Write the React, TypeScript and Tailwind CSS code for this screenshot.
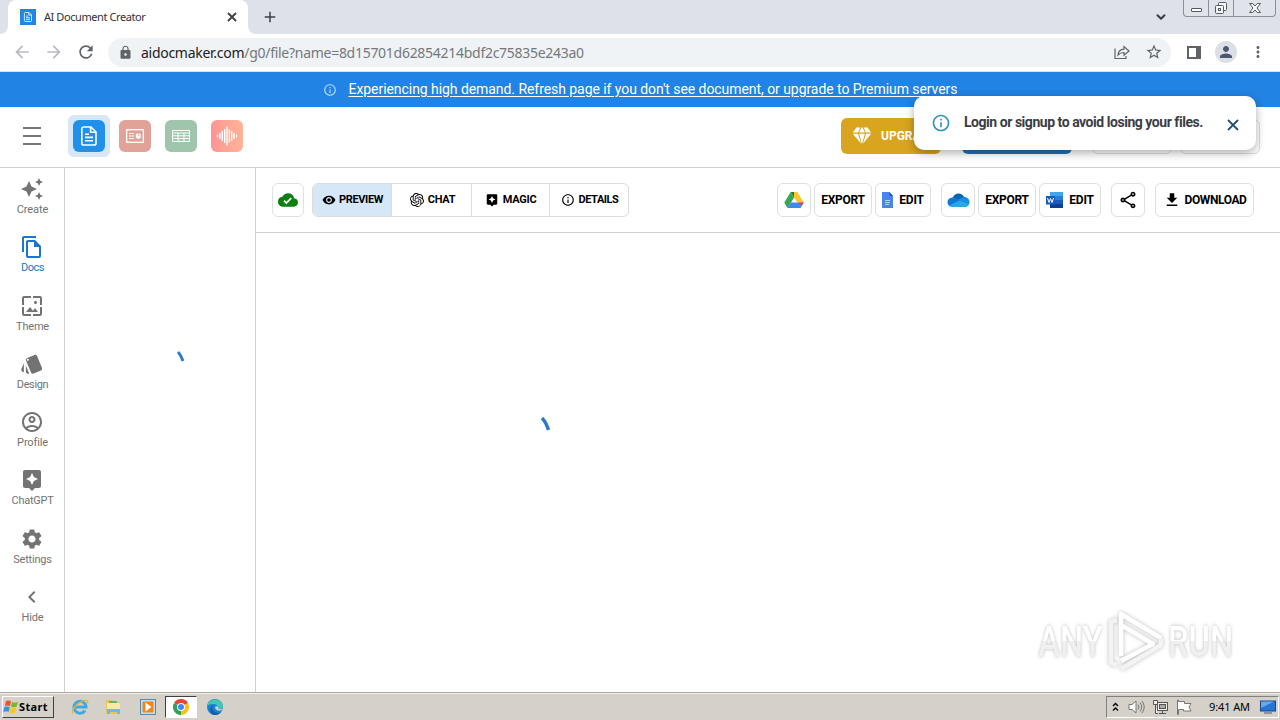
import type { ReactNode } from "react";
import {
  MdArrowBack, MdArrowForward, MdRefresh, MdLock, MdStarBorder, MdPerson, MdMoreVert, MdAdd,
  MdInfoOutline, MdAutoAwesome, MdOutlineFileCopy, MdWallpaper, MdStyle, MdOutlineAccountCircle,
  MdAssistant, MdSettings, MdChevronLeft, MdCloudDone, MdVisibility, MdOutlineShare, MdDownload,
} from "react-icons/md";
import { SiOpenai } from "react-icons/si";
import { ChevronDown } from "lucide-react";

const sidebarItems = [
  { label: "Create", icon: MdAutoAwesome, tracking: "tracking-[-0.1px]" },
  { label: "Docs", icon: MdOutlineFileCopy, tracking: "tracking-[-0.5px]", active: true },
  { label: "Theme", icon: MdWallpaper, tracking: "tracking-[-0.2px]" },
  { label: "Design", icon: MdStyle, tracking: "tracking-[-0.4px]" },
  { label: "Profile", icon: MdOutlineAccountCircle, tracking: "tracking-[-0.15px]" },
  { label: "ChatGPT", icon: MdAssistant, tracking: "tracking-[-0.25px]" },
  { label: "Settings", icon: MdSettings, tracking: "tracking-[-0.2px]" },
  { label: "Hide", icon: MdChevronLeft, tracking: "tracking-[-0.1px]" },
];

function DocGlyph({ className }: { className?: string }) {
  return (
    <svg viewBox="0 0 20 20" className={className} fill="none" stroke="white" strokeWidth="1.6">
      <path d="M4.5 1H12l5 5v11.2a1.8 1.8 0 0 1-1.8 1.8H4.6a1.8 1.8 0 0 1-1.8-1.8V2.8A1.8 1.8 0 0 1 4.5 1Z" />
      <path d="M11.6 1v5.2H17" />
      <path d="M6 8.2h4M6 11.4h8M6 14.8h8" />
    </svg>
  );
}

function TabStrip() {
  return (
    <div className="flex h-[34px] bg-[#dee1e9]">
      <div className="w-2 bg-white">
        <div className="h-full rounded-br-lg bg-[#dee1e9]" />
      </div>
      <div className="flex w-60 items-center rounded-t-lg bg-white pl-3 pr-[9px]">
        <div className="flex h-4 w-4 items-center justify-center bg-[#2187e3]">
          <DocGlyph className="h-2.5 w-2.5" />
        </div>
        <span className="ml-2 flex-1 whitespace-nowrap font-['Noto_Sans',sans-serif] text-[11px] tracking-[-0.42px] text-[#303236]">
          AI Document Creator
        </span>
        <svg className="h-3.5 w-3.5" viewBox="0 0 14 14" stroke="#3c4043" strokeWidth="1.800">
          <path d="m3 3 8 8M11 3l-8 8" />
        </svg>
      </div>
      <div className="w-2 bg-white">
        <div className="h-full rounded-bl-lg bg-[#dee1e9]" />
      </div>
      <MdAdd className="ml-[5px] mt-2 h-[18px] w-[18px] text-[#3c4043]" />
      <div className="flex-1" />
      <ChevronDown className="mr-[15px] mt-2.5 h-3.5 w-3.5 text-[#3c4043]" strokeWidth={3.5} />
      {/* Window controls */}
      <div className="mr-1 flex h-[17px] w-[93px] rounded-b border border-t-0 border-[#8b8f98] bg-[#e0e3e9]">
        <div className="flex w-[25px] items-center justify-center border-r border-[#8b8f98]">
          <div className="mt-1 h-1 w-[11px] rounded-[1px] border border-[#555a62] bg-white" />
        </div>
        <div className="flex w-[25px] items-center justify-center border-r border-[#8b8f98]">
          <svg className="h-3.5 w-3.5" viewBox="0 0 14 14" fill="#f4f5f7" stroke="#555a62">
            <rect x="4.5" y="1.5" width="8" height="8" rx="1" />
            <rect x="1.5" y="4.5" width="8" height="8" rx="1" />
            <rect x="4.5" y="7.5" width="2" height="2" />
          </svg>
        </div>
        <div className="flex flex-1 items-center justify-center">
          <svg className="h-3 w-3.5" viewBox="0 0 14 12" fill="#f7f8fa" stroke="#555a62">
            <path d="M1.5 1.5h3.2L7 4l2.3-2.5h3.2L9 6l3.5 4.5H9.3L7 8l-2.3 2.5H1.5L5 6Z" />
          </svg>
        </div>
      </div>
    </div>
  );
}

function AddressBar() {
  return (
    <div className="flex h-[38px] items-center border-b border-[#dcdfe3] bg-white pb-px text-[#5f6368]">
      <MdArrowBack className="ml-3 h-5 w-5 text-[#b9bbbe]" />
      <MdArrowForward className="ml-3 h-5 w-5 text-[#b9bbbe]" />
      <MdRefresh className="ml-3 h-5 w-5" />
      <div className="ml-3 flex h-[29px] w-[1063px] items-center rounded-full bg-[#f0f3f5] pl-2.5 pr-2">
        <MdLock className="h-[15px] w-[15px]" />
        <span className="ml-2 mt-0.5 flex-1 whitespace-nowrap font-['Noto_Sans',sans-serif] text-sm tracking-[-0.28px] text-[#74787d]">
          <span className="text-[#202124]">aidocmaker.com</span>/g0/file?name=8d15701d62854214bdf2c75835e243a0
        </span>
        <svg className="mr-[15px] h-4 w-4" viewBox="0 0 16 16" fill="none" stroke="#5f6368" strokeWidth="1.2">
          <path d="M1 4.5V14.5h11V12" />
          <path d="M4 11c.3-4 2.7-5.7 6-5.8V2.5L15 7l-5 4.200V8.500C7.200 8.500 5.500 9.200 4 11Z" />
        </svg>
        <MdStarBorder className="h-[18px] w-[18px]" />
      </div>
      <div className="ml-4 h-[13px] w-3.5 border-2 border-r-[5px] border-[#5f6368]" />
      <div className="ml-3.5 flex h-[22px] w-[22px] items-center justify-center rounded-full bg-[#dcdfe5]">
        <MdPerson className="h-[18px] w-[18px] text-[#4b5670]" />
      </div>
      <MdMoreVert className="ml-3 h-[18px] w-[18px]" />
    </div>
  );
}

function Banner() {
  return (
    <div className="flex h-[35px] items-center justify-center bg-[#2183e3] text-white">
      <MdInfoOutline className="mr-3 h-[14px] w-[14px] text-[#b9dcfa]" />
      <span className="mb-0.5 whitespace-nowrap text-sm tracking-[-0.06px] underline underline-offset-2">
        Experiencing high demand. Refresh page if you don't see document, or upgrade to Premium servers
      </span>
    </div>
  );
}

function AppHeader() {
  return (
    <div className="relative flex h-[61px] items-center border-b border-[#cfcfcf] bg-white pb-0.5">
      <div className="ml-[23px] flex w-[18px] flex-col gap-1.5">
        <div className="h-0.5 bg-[#777]" />
        <div className="h-0.5 bg-[#777]" />
        <div className="h-0.5 bg-[#777]" />
      </div>
      <div className="ml-[27px] flex h-[42px] w-[42px] items-center justify-center rounded-md bg-[#d6e7f8]">
        <div className="flex h-8 w-8 items-center justify-center rounded-md bg-[#2090ea]">
          <DocGlyph className="h-5 w-5" />
        </div>
      </div>
      <div className="ml-[9px] flex gap-3.5">
        <div className="flex h-8 w-8 items-center justify-center rounded-md bg-[#e1a297]">
          <svg className="h-[14px] w-[18px]" viewBox="0 0 18 14" fill="none" stroke="white">
            <rect x=".7" y=".7" width="16.600" height="12.600" strokeWidth="1.300" />
            <path d="M3 4.500h5M3 7h5M3 9.500h5" strokeWidth="1.200" />
            <circle cx="12.300" cy="7" r="2.700" fill="white" stroke="none" />
            <path d="M12.500 6.800V3.800M12.500 6.800h3" stroke="#e1a297" strokeWidth=".6" />
          </svg>
        </div>
        <div className="flex h-8 w-8 items-center justify-center rounded-md bg-[#9fc5ad]">
          <svg className="h-3 w-[18px]" viewBox="0 0 18 12" fill="none" stroke="white">
            <path d="M.5.5h17v11H.5ZM.5 3h17M.5 5.800h17M.5 8.600h17M6 3v8.500M12 3v8.500" />
          </svg>
        </div>
        <div className="flex h-8 w-8 items-center justify-center rounded-md bg-gradient-to-r from-[#ff9494] to-[#ffb497]">
          <svg className="h-5 w-[22px]" viewBox="0 0 22 20" stroke="white" strokeWidth="1.400" strokeLinecap="round">
            <path d="M1.500 9.500v1M4 7.500v5M6.300 5.500v9M8.700 3.500v13M11 1v18M13.400 4v12M15.700 5.500v9M18 7.500v5M20.500 9.500v1" />
          </svg>
        </div>
      </div>
      <div className="flex-1" />
      <div className="flex h-9 w-[100px] items-center rounded-md bg-[#d9a51e] pl-[11px] text-white">
        <svg className="h-[18px] w-5" viewBox="0 0 20 18" fill="white">
          <path d="M4.500.5h3.800L6 5.500H.8ZM9.500.5h1L13 5.500H7ZM11.700.5h3.800l3.700 5H14ZM.8 6.800H6L9 16.500ZM7.200 6.800h5.600L10 17.200ZM14 6.800h5.200L11 16.500Z" />
        </svg>
        <span className="ml-[9px] text-xs font-bold">UPGRADE</span>
      </div>
      <div className="ml-[21px] h-[35px] w-[110px] rounded-md bg-[#1f72ba]" />
      <div className="ml-5 h-[35px] w-20 rounded-md border border-[#ddd]" />
      <div className="ml-2 mr-5 h-[35px] w-20 rounded-md border border-[#ddd]" />
      {/* Login toast */}
      <div className="absolute right-6 top-[-11px] flex h-[54px] w-[342px] items-center rounded-[10px] bg-white pl-[17px] pr-4 shadow-[0_3px_10px_rgba(0,0,0,0.32)]">
        <MdInfoOutline className="h-5 w-5 text-[#3194bf]" />
        <span className="ml-[13px] mb-0.5 flex-1 whitespace-nowrap text-sm font-bold tracking-[-0.46px] text-[#3b3d44]">
          Login or signup to avoid losing your files.
        </span>
        <svg className="mt-1 h-3.5 w-3.5" viewBox="0 0 14 14" stroke="#24506b" strokeWidth="1.800">
          <path d="M2 2l10 10M12 2L2 12" />
        </svg>
      </div>
    </div>
  );
}

function Sidebar() {
  return (
    <div className="flex w-[65px] flex-col border-r border-[#d0d0d0] pt-[9px]">
      {sidebarItems.map(({ label, icon: Icon, tracking, active }) => (
        <div key={label} className={`flex h-[58.3px] flex-col items-center ${active ? "text-[#1b77cc]" : "text-[#737373]"}`}>
          <Icon className="h-6 w-6" />
          <span className={`mt-px whitespace-nowrap pl-px text-[11px] leading-4 ${tracking}`}>{label}</span>
        </div>
      ))}
    </div>
  );
}

function Button({ className, children }: { className: string; children?: ReactNode }) {
  return (
    <div className={`flex h-[34px] items-center justify-center whitespace-nowrap rounded-md border border-[#e0e0e0] bg-white text-xs font-bold text-black ${className}`}>
      {children}
    </div>
  );
}

function DriveLogo() {
  return (
    <svg className="h-[18px] w-5" viewBox="0 0 20 18">
      <path d="M6.700 1 10 6.700 3.500 17 .3 11.500Z" fill="#34a853" />
      <path d="M6.700 1h6.600l6.400 10.500h-6.500Z" fill="#fbc52c" />
      <path d="M6.800 11.500h12.900L16.500 17h-13Z" fill="#4285f4" />
      <path d="M14.800 11.500h4.900L17.800 15Z" fill="#ea4335" />
      <path d="M6.700 1h3.300v5.700Z" fill="#188038" />
    </svg>
  );
}

function OneDriveLogo() {
  return (
    <svg className="h-4 w-[23px]" viewBox="0 0 23 16">
      <path d="M5.500 6C7 1.500 13.500-.8 17 4.800L18 8 6 12Z" fill="#0364b8" />
      <path d="M17 5c3-.3 5.500 2.200 5.500 5s-2 4.500-4.500 4.800L10 8Z" fill="#1490df" />
      <path d="M5.500 5.500c3-.5 5 1.800 8 3.500L3 14.500C-1.200 12 0 5.800 5.500 5.500Z" fill="#0f78d4" />
      <path d="M12.500 8.500 22 12.500c-1 2-2.500 2.500-4 2.500H5c-1.300 0-2.200-.5-3-1.200Z" fill="#28a8ea" />
    </svg>
  );
}

function DocumentToolbar() {
  return (
    <div className="flex h-[65px] items-center border-b border-[#d0d0d0] pl-4 pr-[26px]">
      <Button className="w-8">
        <MdCloudDone className="h-5 w-5 text-[#0b7f10]" />
      </Button>
      <div className="ml-2 flex h-[34px] w-[317px] overflow-hidden rounded-md border border-[#dcdcdc] text-[11px] font-bold text-black">
        <div className="flex flex-1 items-center justify-center gap-[3px] border-r border-[#d4dce4] bg-[#d6e7f7] pl-px">
          <MdVisibility className="h-3.5 w-3.5" />
          <span className="tracking-[-0.35px]">PREVIEW</span>
        </div>
        <div className="flex flex-1 items-center justify-center gap-1 border-r border-[#dcdcdc] pl-0.5">
          <SiOpenai className="h-3.5 w-3.5" />
          <span className="tracking-[-0.3px]">CHAT</span>
        </div>
        <div className="flex flex-1 items-center justify-center gap-1 border-r border-[#dcdcdc]">
          <MdAssistant className="h-3.5 w-3.5" />
          <span className="tracking-[-0.25px]">MAGIC</span>
        </div>
        <div className="flex flex-1 items-center justify-center gap-1 pl-px">
          <MdInfoOutline className="h-3.5 w-3.5" />
          <span className="tracking-[-0.45px]">DETAILS</span>
        </div>
      </div>
      <div className="flex-1" />
      <div className="flex gap-[3px]">
        <Button className="w-[34px]"><DriveLogo /></Button>
        <Button className="w-[58px] tracking-[-0.3px]">EXPORT</Button>
        <Button className="w-14 gap-1.5 tracking-[-0.2px]">
          <svg className="h-4 w-[11px]" viewBox="0 0 11 16">
            <path d="M0 0h7.500L11 4v12H0Z" fill="#4a84ee" />
            <path d="M7.500 0v4H11Z" fill="#2458b5" />
            <path d="M3 8.500h5M3 10.500h5M3 12.500h4" stroke="#b9d1fb" strokeWidth="1.200" />
          </svg>
          EDIT
        </Button>
      </div>
      <div className="ml-2.5 flex gap-[3px]">
        <Button className="w-[34px]"><OneDriveLogo /></Button>
        <Button className="w-[58px] tracking-[-0.3px]">EXPORT</Button>
        <Button className="w-[62px] gap-1.5 tracking-[-0.2px]">
          <svg className="h-4 w-[17px]" viewBox="0 0 17 16">
            <path d="M4 0h13v4H4Z" fill="#41a5ee" />
            <path d="M4 4h13v4H4Z" fill="#2b7cd3" />
            <path d="M4 8h13v4H4Z" fill="#185abd" />
            <path d="M4 12h13v4H4Z" fill="#103f91" />
            <rect y="4" width="9" height="8.500" fill="#185abd" />
            <path d="m1.500 6 1.500 4.500L4.500 6.500 6 10.500 7.500 6" fill="none" stroke="white" />
          </svg>
          EDIT
        </Button>
      </div>
      <Button className="ml-2.5 w-[34px]"><MdOutlineShare className="h-5 w-5" /></Button>
      <Button className="ml-2.5 w-[99px] gap-1 tracking-[-0.4px]">
        <MdDownload className="h-[18px] w-[18px]" />
        DOWNLOAD
      </Button>
    </div>
  );
}

function Watermark() {
  return (
    <div className="absolute bottom-[20px] right-[26px] flex items-center font-['Roboto',sans-serif] text-[43px] font-medium leading-none">
      <span className="origin-right scale-x-[0.76] bg-gradient-to-b from-white from-50% to-[#f0f0f0] to-50% bg-clip-text text-transparent drop-shadow-[0_0_2px_#bcbcbc]">
        ANY
      </span>
      <svg className="mx-1 h-[62px] w-[58px] overflow-visible drop-shadow-[0_0_2px_#bcbcbc]" viewBox="0 0 58 62" fill="none" stroke="white" strokeWidth="4.5" strokeLinejoin="round">
        <path d="M15 46V4l40 24" />
        <path d="M11 10 5 12v41l6 2M15 59l40-24v-7" stroke="#f3f3f3" />
        <path d="M15 15l32 19-32 17" />
      </svg>
      <span className="origin-left scale-x-[0.76] bg-gradient-to-b from-white from-50% to-[#f0f0f0] to-50% bg-clip-text text-transparent drop-shadow-[0_0_2px_#bcbcbc]">
        RUN
      </span>
    </div>
  );
}

function Taskbar() {
  return (
    <div className="flex h-7 items-center border-t border-[#aaa8a3] bg-[#d5d0c8] font-['Noto_Sans',sans-serif] shadow-[inset_0_1px_0_#f2f0ec]">
      <div className="ml-0.5 flex h-[22px] w-[52px] items-center border border-b-[#404040] border-l-white border-r-[#404040] border-t-white text-[11px] font-bold text-black">
        <svg className="h-4 w-4" viewBox="0 0 16 16">
          <path d="M3 2c2-1 3.500-.5 5 .3L7 7.200C5.500 6.300 4 6 1.800 7Z" fill="#e7562b" />
          <path d="M9 3c2 1 3.500.8 6-.2l-1.500 5C11 8.500 10 8.500 8 7.500Z" fill="#76b82a" />
          <path d="M1.500 8c2-1 4-.5 5.300.3L5.500 13C4 12 2.500 12 .2 13Z" fill="#3c8fd8" />
          <path d="M7.800 8.500c2 1 3.500 1 5.500.3L12 13.800c-2.200.8-4 .6-5.500-.3Z" fill="#f9c52a" />
        </svg>
        <span className="mt-px tracking-[0.35px]">Start</span>
      </div>
      {/* Internet Explorer */}
      <svg className="ml-[17px] h-[18px] w-[18px]" viewBox="0 0 18 18" fill="none">
        <path d="M14 12.500A6 6 0 1 1 15 9H4" stroke="#3eaae5" strokeWidth="3" />
        <path d="M2 15.500C-1 11 11 1 16 2.500c1.300.5.800 2 .3 3" stroke="#e5b632" strokeWidth="1.300" />
      </svg>
      {/* Explorer */}
      <svg className="ml-4 h-[18px] w-[18px]" viewBox="0 0 18 18">
        <path d="M1 2h6l1 2h7v12H1Z" fill="#e9c55b" />
        <path d="M2 5h13v7H2Z" fill="#f9e9a4" />
        <path d="M4 3h8v2H4Z" fill="#6cb36a" />
        <path d="M2 16v-5h13v5h-3v-2H5v2Z" fill="#72b8df" />
      </svg>
      {/* Media player */}
      <svg className="ml-4 h-[18px] w-[18px]" viewBox="0 0 18 18">
        <rect x="1.500" y="1.500" width="15" height="15" fill="#bfe0f2" stroke="#5589ad" />
        <rect x="3.500" y="3.500" width="11" height="11" rx="1" fill="#f08519" />
        <path d="m6.500 4.500 6 4.500-6 4.500Z" fill="white" />
      </svg>
      {/* Chrome */}
      <div className="ml-2 flex h-[22px] w-8 items-center justify-center border border-b-white border-l-[#404040] border-r-white border-t-[#404040] bg-white">
        <svg className="h-4 w-4" viewBox="0 0 16 16">
          <path d="M8 8 1.070 4A8 8 0 0 1 14.930 4Z" fill="#e94335" />
          <path d="M8 8 14.930 4A8 8 0 0 1 8 16Z" fill="#fbc116" />
          <path d="M8 8v8A8 8 0 0 1 1.070 4Z" fill="#31a350" />
          <circle cx="8" cy="8" r="4" fill="white" />
          <circle cx="8" cy="8" r="3" fill="#4285f4" />
        </svg>
      </div>
      {/* Edge */}
      <svg className="ml-2.5 h-4 w-4" viewBox="0 0 16 16">
        <circle cx="8" cy="8" r="8" fill="#1681d4" />
        <path d="M.3 7C1-1.500 15.500-2 16 7c0 3-3 4-5.500 3.300C12 7 9 4.500 5.500 5 3 5.200 1 6 .3 7Z" fill="#45c6b0" />
        <path d="M5.500 7C4 11 8 15 13.800 13.500A8 8 0 0 1 6 15.700C2 13 2.500 8 5.500 7Z" fill="#135ea8" />
        <path d="M8 8c1-1 3-.8 3 .5 0 1.300 1.500 2.500 5 1.500-1 2.500-8 2.500-8-2Z" fill="#d5d0c8" />
      </svg>
      <div className="flex-1" />
      {/* Tray */}
      <div className="mr-px flex h-[22px] w-[173px] items-center border border-b-white border-l-[#808080] border-r-white border-t-[#808080] pl-[5px]">
        <svg className="h-2.5 w-[7px]" viewBox="0 0 7 10" fill="none" stroke="black" strokeWidth="1.400">
          <path d="m1 4 2.500-2.500L6 4M1 8.500 3.500 6 6 8.500" />
        </svg>
        <svg className="ml-[9px] h-4 w-[17px]" viewBox="0 0 17 16" fill="none" stroke="#777">
          <path d="M1 5.500h3L8 2v12l-4-3.500H1Z" fill="white" />
          <path d="M10 5.500q2 2.500 0 5M12 3.500q3.500 4.500 0 9M14 2q4.500 6 0 12" />
        </svg>
        <svg className="ml-[7px] h-4 w-4" viewBox="0 0 16 16" fill="#eee" stroke="#555">
          <rect x="5.500" y="3.500" width="10" height="8" />
          <rect x="7.500" y="5.500" width="6" height="4" fill="#aaa" />
          <path d="M7 14.500h7M10.500 12v2.500M1.500 1.500h4v4h-4ZM3.500 6v8.500H6" />
        </svg>
        <svg className="ml-2 h-4 w-4" viewBox="0 0 16 16" fill="white" stroke="#777">
          <path d="M1.500 1v14.500h1V10.500h5V12H15l-2-4 2-3.500H8.500V2.500h-6V1Z" />
        </svg>
        <span className="ml-[17px] mt-px whitespace-nowrap text-[11px] tracking-[-0.1px] text-black">9:41 AM</span>
        <svg className="ml-2.5 h-4 w-4" viewBox="0 0 16 16">
          <rect x=".5" y="2" width="15" height="10" fill="#2874d0" stroke="#174a85" />
          <path d="M1 2.500h13L1 9Z" fill="#68a7e8" />
          <path d="M4 14h8" stroke="#6d8198" strokeWidth="1.500" />
        </svg>
      </div>
    </div>
  );
}

export default function App() {
  return (
    <div className="flex h-[720px] w-[1280px] flex-col overflow-hidden bg-white font-['Roboto',sans-serif]">
      <TabStrip />
      <AddressBar />
      <Banner />
      <AppHeader />
      <div className="flex min-h-0 flex-1">
        <Sidebar />
        {/* File list, loading */}
        <div className="w-[191px] border-r border-[#d0d0d0] pl-28 pt-[183px]">
          <svg className="h-[11px] w-2" viewBox="0 0 8 11" fill="none" stroke="#2779c9" strokeWidth="2.800">
            <path d="M1 1Q4 4 6 10" />
          </svg>
        </div>
        <div className="relative flex flex-1 flex-col">
          <DocumentToolbar />
          <div className="pl-[284px] pt-[184px]">
            <svg className="h-3.5 w-2.5" viewBox="0 0 10 14" fill="none" stroke="#2779c9" strokeWidth="3.400">
              <path d="M2 1Q6 5 8.500 13" />
            </svg>
          </div>
          <Watermark />
        </div>
      </div>
      <Taskbar />
    </div>
  );
}
